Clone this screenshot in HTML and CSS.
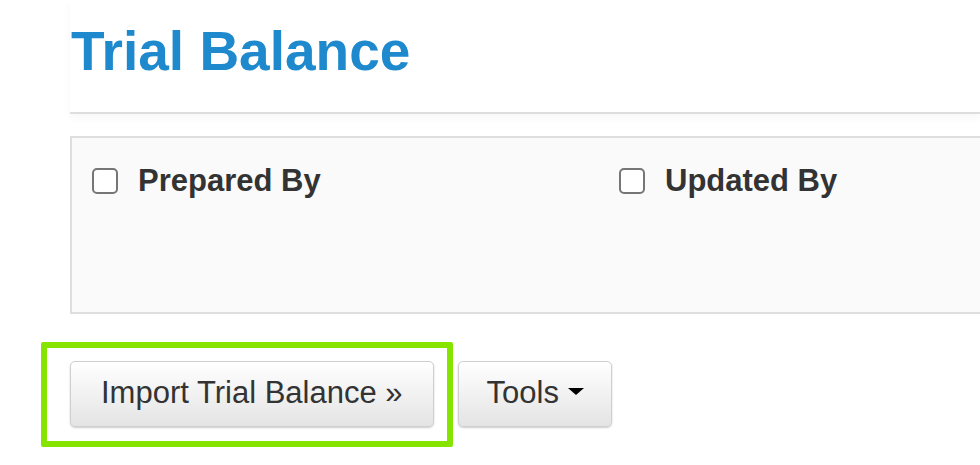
FILE: index.html
```html
<!DOCTYPE html>
<html lang="en">
<head>
    <meta charset="UTF-8">
    <meta name="viewport" content="width=device-width, initial-scale=1.0">
    <title>Trial Balance</title>
    <link rel="stylesheet" href="styles.css">
</head>
<body>
    <div class="page">
        <div class="page-header">
            <h1>Trial Balance</h1>
        </div>

        <div class="filters">
            <label class="filter">
                <input type="checkbox">
                <span>Prepared By</span>
            </label>
            <label class="filter">
                <input type="checkbox">
                <span>Updated By</span>
            </label>
        </div>

        <div class="actions">
            <div class="highlight">
                <button class="btn">Import Trial Balance &raquo;</button>
                <span class="highlight-box"></span>
            </div>
            <button class="btn btn-tools">Tools <span class="caret"></span></button>
        </div>
    </div>
</body>
</html>
```

FILE: styles.css
```css
body {
    margin: 0;
    font-family: "Liberation Sans", Arial, sans-serif;
    color: #333;
    background: #fff;
}
.page {
    padding: 0 0 40px 70px;
}
.page-header {
    border-bottom: 2px solid #dedede;
    box-shadow: 0 4px 8px rgba(0, 0, 0, 0.035);
    padding: 21px 0 31px 1px;
}
.page-header h1 {
    margin: 0;
    font-size: 55px;
    line-height: 60px;
    font-weight: bold;
    color: #1e89cd;
}
.filters {
    margin-top: 22px;
    height: 174px;
    border: 2px solid #dedede;
    border-right: none;
    background: #fafafa;
    display: grid;
    grid-template-columns: 527px 1fr;
    align-items: start;
    padding: 0 0 0 20px;
}
.filter {
    display: flex;
    align-items: flex-start;
    gap: 20px;
    margin-top: 25px;
    font-size: 31px;
    font-weight: bold;
    line-height: 36px;
}
.filter input {
    appearance: none;
    margin: 5px 0 0;
    width: 26px;
    height: 26px;
    border: 2px solid #767676;
    border-radius: 5px;
    background: #fff;
}
.actions {
    margin-top: 47px;
    display: flex;
    gap: 24px;
}
.highlight {
    position: relative;
}
.highlight-box {
    position: absolute;
    top: -19px;
    bottom: -20px;
    left: -29px;
    right: -19px;
    border: 6px solid #86e400;
    border-radius: 2px;
}
.btn {
    font-family: "Liberation Sans", Arial, sans-serif;
    font-size: 31px;
    line-height: 40px;
    color: #333;
    padding: 11px 30px 13px;
    border: 1px solid #cfcfcf;
    border-radius: 5px;
    background: linear-gradient(#fff, #e4e4e4);
    box-shadow: 0 1px 2px rgba(0, 0, 0, 0.2);
}
.btn-tools {
    padding-left: 28px;
    padding-right: 27px;
}
.caret {
    display: inline-block;
    margin-left: 0;
    vertical-align: middle;
    border-top: 7px solid #000;
    border-left: 8px solid transparent;
    border-right: 8px solid transparent;
    position: relative;
    top: -3px;
}
```
